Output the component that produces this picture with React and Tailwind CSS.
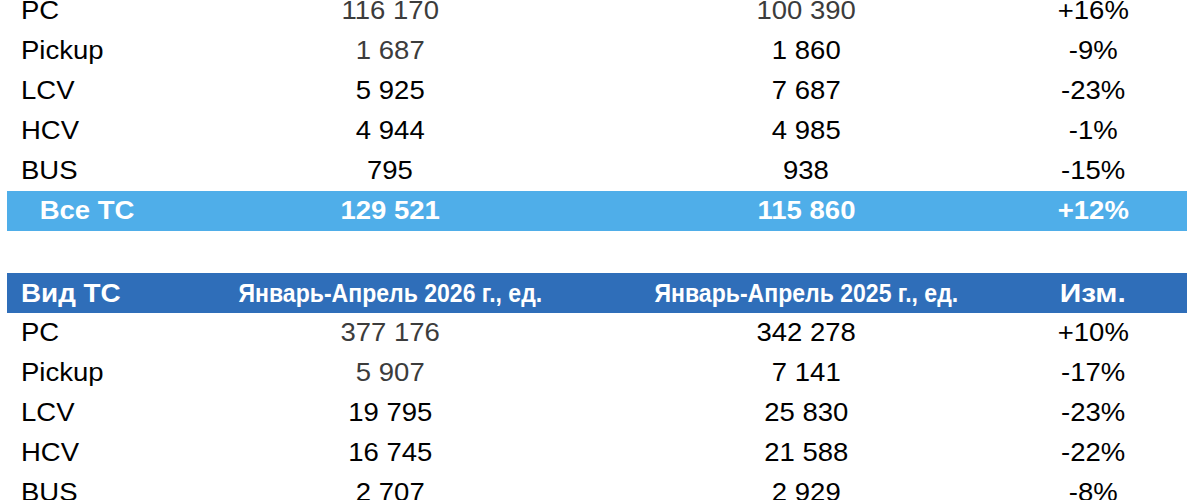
import React from "react";

const first = [
  { name: "PC", a: "116 170", b: "100 390", c: "+16%", gray: true },
  { name: "Pickup", a: "1 687", b: "1 860", c: "-9%", grayA: true },
  { name: "LCV", a: "5 925", b: "7 687", c: "-23%" },
  { name: "HCV", a: "4 944", b: "4 985", c: "-1%" },
  { name: "BUS", a: "795", b: "938", c: "-15%" },
];

const second = [
  { name: "PC", a: "377 176", b: "342 278", c: "+10%", grayA: true },
  { name: "Pickup", a: "5 907", b: "7 141", c: "-17%", grayA: true },
  { name: "LCV", a: "19 795", b: "25 830", c: "-23%" },
  { name: "HCV", a: "16 745", b: "21 588", c: "-22%" },
  { name: "BUS", a: "2 707", b: "2 929", c: "-8%" },
];

// текст в исходнике чуть растянут по горизонтали
function Wide({ children, left }) {
  return (
    <span className={"inline-block scale-x-[1.1] " + (left ? "origin-left" : "")}>
      {children}
    </span>
  );
}

function Row({ r }) {
  return (
    <div className="flex h-[40px] items-center">
      <div className="w-[160px] pl-[14px]">
        <Wide left>{r.name}</Wide>
      </div>
      <div className={"w-[446px] text-center " + (r.gray || r.grayA ? "text-[#3c3c3c]" : "")}>
        <Wide>{r.a}</Wide>
      </div>
      <div className={"w-[386px] text-center " + (r.gray ? "text-[#3c3c3c]" : "")}>
        <Wide>{r.b}</Wide>
      </div>
      <div className="w-[188px] text-center">
        <Wide>{r.c}</Wide>
      </div>
    </div>
  );
}

export default function App() {
  return (
    <div
      className="h-[500px] w-[1200px] overflow-hidden bg-white text-[25px] text-black"
      style={{ fontFamily: '"Liberation Sans", Arial, sans-serif' }}
    >
      <div className="mt-[-9px] ml-[7px] w-[1180px]">
        {first.map((r) => (
          <Row key={r.name} r={r} />
        ))}
        <div className="flex h-[40px] items-center bg-[#4faee9] font-bold text-white">
          <div className="w-[160px] text-center">
            <Wide>Все ТС</Wide>
          </div>
          <div className="w-[446px] text-center">
            <Wide>129 521</Wide>
          </div>
          <div className="w-[386px] text-center">
            <Wide>115 860</Wide>
          </div>
          <div className="w-[188px] text-center">
            <Wide>+12%</Wide>
          </div>
        </div>

        <div className="mt-[42px] flex h-[40px] items-center bg-[#2f6eb9] text-[26px] font-bold text-white">
          <div className="w-[160px] pl-[14px]">
            <span className="inline-block origin-left scale-x-[1.07]">Вид ТС</span>
          </div>
          <div className="w-[446px] text-center">
            <span className="inline-block scale-x-[0.886]">Январь-Апрель 2026 г., ед.</span>
          </div>
          <div className="w-[386px] text-center">
            <span className="inline-block scale-x-[0.886]">Январь-Апрель 2025 г., ед.</span>
          </div>
          <div className="w-[188px] text-center">
            <span className="inline-block scale-x-[1.15]">Изм.</span>
          </div>
        </div>
        {second.map((r) => (
          <Row key={r.name} r={r} />
        ))}
      </div>
    </div>
  );
}
